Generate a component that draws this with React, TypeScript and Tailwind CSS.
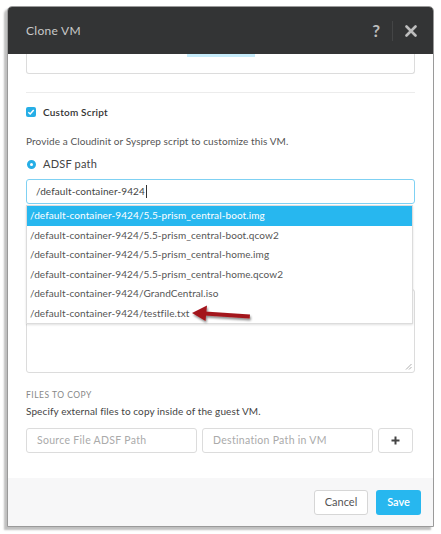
import React from 'react';

const options = [
  '/default-container-9424/5.5-prism_central-boot.img',
  '/default-container-9424/5.5-prism_central-boot.qcow2',
  '/default-container-9424/5.5-prism_central-home.img',
  '/default-container-9424/5.5-prism_central-home.qcow2',
  '/default-container-9424/GrandCentral.iso',
  '/default-container-9424/testfile.txt',
];

export default function App() {
  return (
    <div
      className="relative w-[441px] h-[534px] bg-white overflow-hidden pl-[7px] pt-[6px]"
      style={{ fontFamily: 'Lato, "Open Sans", Arial, sans-serif' }}
    >
      {/* Modal */}
      <div className="w-[427px] h-[521px] flex flex-col rounded-t-[5px] border border-[#9a9a9a] shadow-[-3px_3px_2px_rgba(0,0,0,0.25)] overflow-hidden bg-white">
        {/* Header */}
        <div className="h-[47px] shrink-0 bg-[#333435] flex items-center pl-[18px] pr-[16px]">
          <span className="text-[12px] text-[#c9c9c9] tracking-[0.3px]">Clone VM</span>
          <div className="ml-auto flex items-center">
            <span className="text-[17px] font-bold text-[#bdbdbd] leading-none">?</span>
            <div className="w-px h-[20px] bg-[#444546] mx-[12px]" />
            <svg width="12" height="12" viewBox="0 0 12 12">
              <path d="M1.5 1.5 L10.5 10.5 M10.5 1.5 L1.5 10.5" stroke="#bdbdbd" strokeWidth="2.6" strokeLinecap="round" />
            </svg>
          </div>
        </div>

        {/* Body */}
        <div className="relative flex-1 px-[18px]">
          <div className="relative h-[20px] border-x border-b border-[#dcdcdc] rounded-b-[3px]">
            <div className="absolute left-[160px] top-0 w-[68px] h-[3px] bg-[#c6ecfb]" />
          </div>
          <div className="mt-[18px] h-px bg-[#ececec]" />

          <label className="mt-[13px] flex items-center h-[12px]">
            <span className="w-[10px] h-[10px] rounded-[2px] bg-[#26aee6] flex items-center justify-center">
              <svg width="8" height="8" viewBox="0 0 8 8">
                <path d="M1.3 4.2 L3.2 6 L6.7 2" stroke="white" strokeWidth="1.5" fill="none" />
              </svg>
            </span>
            <span className="ml-[7px] text-[10px] font-semibold text-[#333] tracking-[0.2px]">Custom Script</span>
          </label>

          <p className="mt-[16px] text-[10px] leading-[14px] text-[#555] tracking-[0.1px]">
            Provide a Cloudinit or Sysprep script to customize this VM.
          </p>

          <div className="mt-[10px] flex items-center h-[12px]">
            <span className="ml-[1px] w-[9px] h-[9px] rounded-full border-[3px] border-[#26aee6] bg-white" />
            <span className="ml-[7px] text-[11px] text-[#444] tracking-[0.2px]">ADSF path</span>
          </div>

          <div className="mt-[9px] h-[25px] border border-[#7fd1f3] rounded-[3px] flex items-center pl-[9px]">
            <span className="text-[10px] text-[#444] tracking-[0.1px]">/default-container-9424</span>
            <span className="w-px h-[13px] bg-[#333] ml-[1px]" />
          </div>

          {/* Dropdown */}
          <div className="absolute left-[18px] top-[151px] w-[387px] bg-white border border-[#dcdcdc] shadow-[0_1px_2px_rgba(0,0,0,0.12)] z-10">
            {options.map((o, i) => (
              <div
                key={o}
                className={`h-[19.5px] flex items-center pl-[3px] text-[10px] tracking-[0.1px] ${
                  i === 0 ? 'bg-[#27b7ef] text-white' : 'text-[#555]'
                }`}
              >
                {o}
              </div>
            ))}
          </div>

          {/* Textarea (partly behind dropdown) */}
          <div className="relative mt-[85px] h-[84px] border border-[#dcdcdc] rounded-[3px]">
            <svg className="absolute right-[2px] bottom-[2px]" width="7" height="7" viewBox="0 0 7 7">
              <path d="M6.5 1 L1 6.5 M6.5 4 L4 6.5" stroke="#999" strokeWidth="0.8" />
            </svg>
          </div>

          <div className="mt-[17px] text-[8.5px] tracking-[0.5px] text-[#888] uppercase leading-[10px]">
            Files to copy
          </div>
          <p className="mt-[4px] text-[10px] leading-[14px] text-[#444] tracking-[0.1px]">
            Specify external files to copy inside of the guest VM.
          </p>

          <div className="mt-[10px] flex gap-[5px]">
            <div className="w-[171px] h-[25px] border border-[#dcdcdc] rounded-[3px] flex items-center pl-[10px] text-[10.5px] tracking-[0.3px] text-[#aaa]">
              Source File ADSF Path
            </div>
            <div className="w-[171px] h-[25px] border border-[#dcdcdc] rounded-[3px] flex items-center pl-[10px] text-[10.5px] tracking-[0.3px] text-[#aaa]">
              Destination Path in VM
            </div>
            <div className="w-[35px] h-[25px] border border-[#dcdcdc] rounded-[3px] flex items-center justify-center">
              <svg width="9" height="9" viewBox="0 0 9 9">
                <path d="M4.5 0.5 V8.5 M0.5 4.5 H8.5" stroke="#444" strokeWidth="2" />
              </svg>
            </div>
          </div>
        </div>

        {/* Footer */}
        <div className="h-[48px] shrink-0 bg-[#f7f7f8] flex items-center justify-end gap-[8px] pr-[12px]">
          <button className="w-[54px] h-[25px] bg-white border border-[#d6d6d6] rounded-[3px] text-[11px] text-[#555]">
            Cancel
          </button>
          <button className="w-[45px] h-[25px] bg-[#27b7ef] rounded-[3px] text-[11px] font-semibold text-white">
            Save
          </button>
        </div>
      </div>

      {/* Annotation arrow */}
      <svg className="absolute z-20 left-[186px] top-[302px]" width="74" height="26" viewBox="0 0 74 26">
        <defs>
          <filter id="sh" x="-20%" y="-50%" width="140%" height="200%">
            <feDropShadow dx="1" dy="2" stdDeviation="1.2" floodColor="#000" floodOpacity="0.45" />
          </filter>
        </defs>
        <g filter="url(#sh)">
          <path d="M19 9.5 L64 12.5 L63.7 16.5 L18.7 13.5 Z" fill="#a3161b" />
          <path d="M6 11 L21 3.5 L19.5 19 Z" fill="#a3161b" />
        </g>
      </svg>
    </div>
  );
}
